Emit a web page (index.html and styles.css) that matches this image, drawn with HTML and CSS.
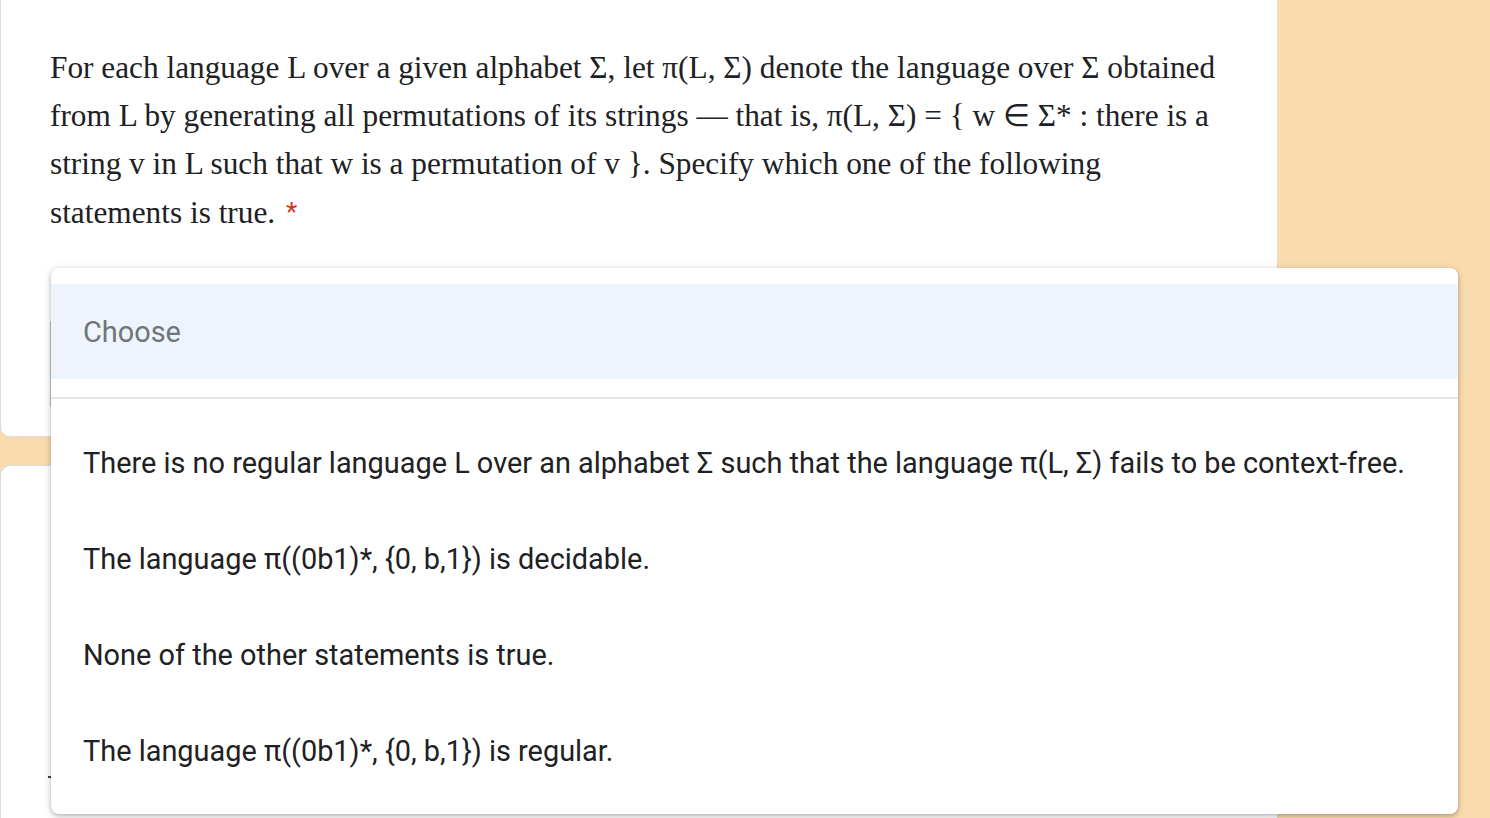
FILE: index.html
```html
<!DOCTYPE html>
<html lang="en">
<head>
<meta charset="utf-8">
<title>Question</title>
<link rel="stylesheet" href="styles.css">
</head>
<body>
<div class="page">
  <section class="card card-question">
    <div class="question">For each language L over a given alphabet Σ, let π(L, Σ) denote the language over Σ obtained<br>from L by generating all permutations of its strings — that is, π(L, Σ) = { w ∈ Σ* : there is a<br>string v in L such that w is a permutation of v }. Specify which one of the following<br>statements is true. <span class="req">*</span></div>
    <div class="select-base"></div>
  </section>
  <section class="card card-next">
    <div class="next-mark"></div>
  </section>
</div>

<div class="menu" role="listbox">
  <div class="menu-item placeholder">Choose</div>
  <div class="menu-divider"></div>
  <div class="menu-item">There is no regular language L over an alphabet Σ such that the language π(L, Σ) fails to be context-free.</div>
  <div class="menu-item">The language π((0b1)*, {0, b,1}) is decidable.</div>
  <div class="menu-item">None of the other statements is true.</div>
  <div class="menu-item">The language π((0b1)*, {0, b,1}) is regular.</div>
</div>
</body>
</html>
```

FILE: styles.css
```css
html, body {
  margin: 0;
  padding: 0;
}
body {
  background: #f9dbad;
  width: 1490px;
  height: 818px;
  overflow: hidden;
  position: relative;
  font-family: Roboto, "Liberation Sans", Arial, sans-serif;
  color: #202124;
}
.page {
  display: flex;
  flex-direction: column;
  gap: 28px;
  width: 1278px;
  margin-top: -10px;
}
.card {
  background: #fff;
  border: 1px solid #dadce0;
  border-radius: 10px;
  box-sizing: border-box;
}
.card-question {
  height: 447px;
  padding: 53px 0 0 49px;
}
.question {
  font-family: "Liberation Serif", "Times New Roman", serif;
  font-size: 31.3px;
  line-height: 48px;
  color: #202124;
  white-space: nowrap;
}
.req {
  color: #d93025;
  font-family: Roboto, "Liberation Sans", sans-serif;
  font-size: 26px;
  margin-left: 3px;
  vertical-align: 2px;
}
.select-base {
  margin-top: 84px;
  margin-left: 0;
  width: 300px;
  height: 86px;
  border-left: 2px solid #c4c7cc;
}
.card-next {
  height: 353px;
  border-bottom: none;
  border-radius: 10px 10px 0 0;
  position: relative;
}
.next-mark {
  position: absolute;
  left: 47px;
  top: 310px;
  width: 4px;
  height: 2px;
  background: #3c4043;
}
.menu {
  position: absolute;
  left: 51px;
  top: 268px;
  width: 1407px;
  height: 546px;
  box-sizing: border-box;
  padding: 16px 0 15px;
  background: #fff;
  border-radius: 8px;
  box-shadow: 0 2px 4px rgba(0,0,0,0.22), 0 1px 10px rgba(0,0,0,0.12);
  display: flex;
  flex-direction: column;
}
.menu-item {
  height: 96px;
  flex: none;
  display: flex;
  align-items: center;
  padding-left: 32px;
  font-size: 28.9px;
  color: #202124;
  white-space: nowrap;
}
.menu-item.placeholder {
  height: 95px;
  background: #eef3fc;
  color: #70757a;
}
.menu-divider {
  flex: none;
  height: 2px;
  background: #e3e4e6;
  margin: 18px 0 16px;
}
```
